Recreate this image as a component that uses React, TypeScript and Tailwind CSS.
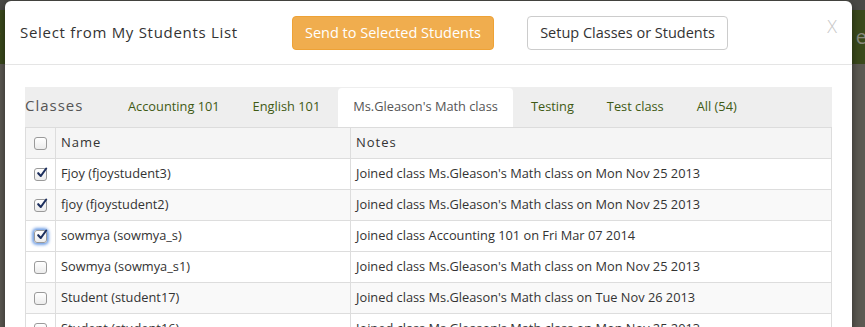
import React from "react";

const font = { fontFamily: "'Open Sans', 'Liberation Sans', sans-serif" };

type Row = { name: string; note: string; checked: boolean; focus?: boolean; bg: string };

const rows: Row[] = [
  { name: "Fjoy (fjoystudent3)", note: "Joined class Ms.Gleason's Math class on Mon Nov 25 2013", checked: true, bg: "bg-white" },
  { name: "fjoy (fjoystudent2)", note: "Joined class Ms.Gleason's Math class on Mon Nov 25 2013", checked: true, bg: "bg-[#f9f9f9]" },
  { name: "sowmya (sowmya_s)", note: "Joined class Accounting 101 on Fri Mar 07 2014", checked: true, focus: true, bg: "bg-white" },
  { name: "Sowmya (sowmya_s1)", note: "Joined class Ms.Gleason's Math class on Mon Nov 25 2013", checked: false, bg: "bg-white" },
  { name: "Student (student17)", note: "Joined class Ms.Gleason's Math class on Tue Nov 26 2013", checked: false, bg: "bg-[#f9f9f9]" },
  { name: "Student (student16)", note: "Joined class Ms.Gleason's Math class on Mon Nov 25 2013", checked: false, bg: "bg-white" },
];

function Check({ checked, focus }: { checked: boolean; focus?: boolean }) {
  return (
    <span
      className={
        "relative flex h-[13px] w-[13px] items-center justify-center rounded-[3px] border border-[#9a9a9a] bg-gradient-to-b from-white to-[#ececec] " +
        (focus ? "shadow-[0_0_3px_2px_rgba(70,130,220,0.75)]" : "")
      }
    >
      {checked && (
        <svg width="12" height="12" viewBox="0 0 12 12" className="absolute left-[1px] top-[-2px]">
          <path d="M2.2 6.2 L4.8 9 L10.2 1.5" fill="none" stroke="#1d2f5e" strokeWidth="2.1" strokeLinecap="round" strokeLinejoin="round" />
        </svg>
      )}
    </span>
  );
}

const tabs = ["Accounting 101", "English 101", "Ms.Gleason's Math class", "Testing", "Test class", "All (54)"];

export default function App() {
  return (
    <div className="relative h-[327px] w-[865px] overflow-hidden bg-[#5c5a53]" style={font}>
      <div className="h-[10px] bg-[#4a4a46]" />
      <div className="flex h-[54px] items-center justify-between bg-[#3b4a1c] text-[20px] text-[#8a8a80]">
        <span className="-ml-[8px]">r</span>
        <span className="mr-[-2px]">e</span>
      </div>

      <div className="absolute left-[5px] top-[1px] w-[847px] rounded-[6px] bg-white shadow-[0_3px_9px_rgba(0,0,0,0.5)]">
        <div className="flex h-[64px] items-center border-b border-[#e5e5e5] pl-[15px] pr-[14px]">
          <div className="w-[272px] text-[15px] tracking-[0.7px] text-[#333]">Select from My Students List</div>
          <button className="h-[34px] w-[202px] rounded-[4px] border border-[#eea236] bg-[#f0ad4e] text-[14.5px] text-white">
            Send to Selected Students
          </button>
          <button className="ml-[33px] h-[34px] w-[201px] rounded-[4px] border border-[#ccc] bg-white text-[14.5px] text-[#333]">
            Setup Classes or Students
          </button>
          <div className="ml-auto mt-[-14px] mr-[1px] text-[18px] font-light leading-none text-[#c8c8c8]">X</div>
        </div>

        <div className="px-[20px] pt-[22px]">
          <div className="flex h-[40px] items-end bg-[#eeeeee]">
            <div className="flex h-[40px] w-[88px] items-center pb-[4px] text-[15px] tracking-[1px] text-[#555]">Classes</div>
            {tabs.map((t) => {
              const active = t === "Ms.Gleason's Math class";
              return (
                <div
                  key={t}
                  className={
                    "mr-[3px] flex h-[39px] items-center rounded-t-[4px] px-[15px] pb-[2px] text-[12.8px] " +
                    (active ? "bg-white text-[#555]" : "text-[#3f5a14]")
                  }
                >
                  {t}
                </div>
              );
            })}
          </div>

          <div className="border-t-[1px] border-[#dcdcdc]">
            <div className="grid h-[31px] grid-cols-[30px_295px_1fr] border-b border-l border-r border-[#ddd] bg-[#f5f5f5] text-[13px] tracking-[1px] text-[#333]">
              <div className="flex items-center justify-center border-r border-[#ddd]">
                <Check checked={false} />
              </div>
              <div className="flex items-center border-r border-[#ddd] pl-[5px]">Name</div>
              <div className="flex items-center pl-[5px]">Notes</div>
            </div>
            {rows.map((r) => (
              <div
                key={r.name}
                className={"grid h-[31px] grid-cols-[30px_295px_1fr] border-b border-l border-r border-[#ddd] text-[12.8px] text-[#333] " + r.bg}
              >
                <div className="flex items-center justify-center border-r border-[#ddd]">
                  <Check checked={r.checked} focus={r.focus} />
                </div>
                <div className="flex items-center border-r border-[#ddd] pl-[5px]">{r.name}</div>
                <div className="flex items-center pl-[5px]">{r.note}</div>
              </div>
            ))}
          </div>
        </div>
      </div>
    </div>
  );
}
